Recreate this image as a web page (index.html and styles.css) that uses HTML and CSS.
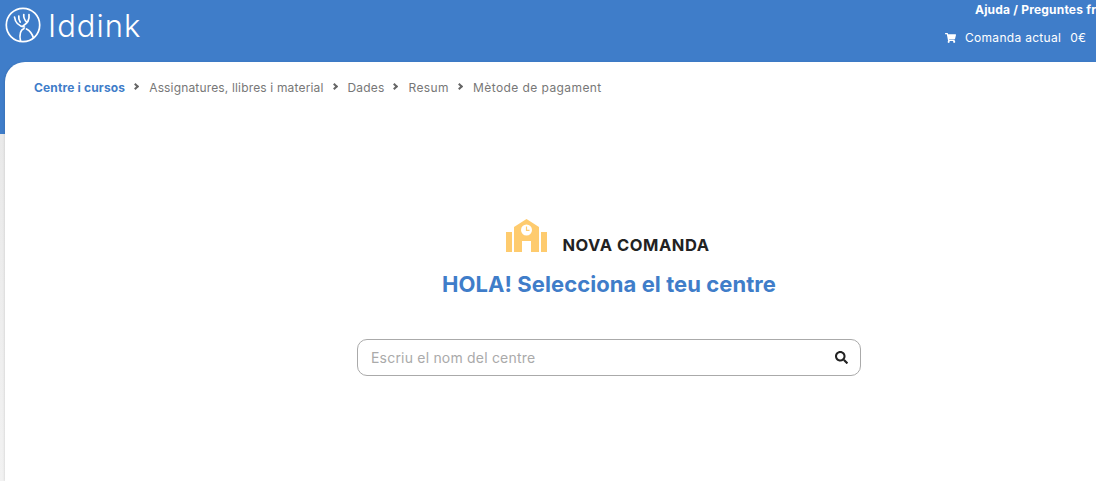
FILE: index.html
```html
<!DOCTYPE html>
<html lang="ca">
<head>
  <meta charset="UTF-8">
  <meta name="viewport" content="width=device-width, initial-scale=1" />
  <title>Iddink | Nova comanda</title>
  <link rel="stylesheet" href="styles.css">
</head>
<body>
  <header class="topbar">
    <a class="brand" href="#">
      <svg class="brand-logo" viewBox="0 0 36 36" fill="none" stroke="#fff" stroke-width="1.700" stroke-linecap="round" stroke-linejoin="round">
        <circle cx="18" cy="18" r="16.700" />
        <path d="M9.500 10c.6 4.500 3 9 10 10" />
        <path d="M13.800 9c-.3 2 0 4 1.400 6" />
        <path d="M24 7.500c.6 4.500-1 8.500-6 11.500" />
        <path d="M18.800 7.500c-.4 2.500.4 5 2.800 7.500" />
        <path d="M19 21.500c-3.500 1.500-5 5-3.500 12.500" />
        <path d="M21.500 22c3 1.500 5.500 4.500 7 9" />
      </svg>
      <span class="brand-name">Iddink</span>
    </a>
    <div class="topbar-links">
      <a class="help-link" href="#">Ajuda / Preguntes freqüents</a>
      <a class="cart-link" href="#">
        <svg class="cart-icon" viewBox="0 0 576 512" fill="#fff">
          <path d="M528 301.300l47.300-208C578.700 78.300 567.300 64 552 64H159.200l-9.200-44.800C147.800 8 137.900 0 126.500 0H24C10.700 0 0 10.700 0 24v16c0 13.300 10.700 24 24 24h69.900l70.200 343.400C147.300 417.100 136 435.200 136 456c0 30.900 25.100 56 56 56s56-25.100 56-56c0-15.700-6.400-29.800-16.800-40h209.600C430.400 426.200 424 440.300 424 456c0 30.900 25.100 56 56 56s56-25.100 56-56c0-22.200-12.900-41.300-31.600-50.400l5.500-24.300c3.400-15-8-29.300-23.400-29.300H218.100l-6.500-32h293c11.200 0 20.900-7.800 23.400-18.700z" />
        </svg>
        <span>Comanda actual</span>
        <span>0€</span>
      </a>
    </div>
  </header>

  <div class="page">
    <main class="card">
      <nav class="steps">
        <span class="step step-active">Centre i cursos</span>
        <span class="step-sep"></span>
        <span class="step">Assignatures, llibres i material</span>
        <span class="step-sep"></span>
        <span class="step">Dades</span>
        <span class="step-sep"></span>
        <span class="step step-wide">Resum</span>
        <span class="step-sep"></span>
        <span class="step step-wide">Mètode de pagament</span>
      </nav>

      <section class="school">
        <div class="school-title">
          <svg class="school-icon" viewBox="0 0 41 33" fill="#fecb6e">
            <rect x="0" y="13" width="6" height="20" />
            <rect x="35" y="13" width="6" height="20" />
            <path d="M20.500 0L33 8v25H8V8z" />
            <rect fill="#fff" x="16" y="22" width="9" height="11" />
            <circle fill="#fff" cx="20.500" cy="11" r="5.500" />
            <path fill="none" stroke="#fecb6e" stroke-width="1.200" d="M20.500 7.500v3.800h3" />
          </svg>
          <h2>NOVA COMANDA</h2>
        </div>
        <h1>HOLA! Selecciona el teu centre</h1>
        <form class="search">
          <input type="text" placeholder="Escriu el nom del centre" />
          <svg class="search-icon" viewBox="0 0 512 512" fill="#222">
            <path d="M505 442.700L405.300 343c-4.500-4.500-10.600-7-17-7H372c27.600-35.300 44-79.700 44-128C416 93.100 322.900 0 208 0S0 93.100 0 208s93.100 208 208 208c48.300 0 92.700-16.400 128-44v16.300c0 6.400 2.500 12.500 7 17l99.700 99.700c9.400 9.400 24.600 9.400 33.900 0l28.300-28.300c9.400-9.400 9.400-24.600.1-34zM208 336c-70.700 0-128-57.200-128-128 0-70.700 57.200-128 128-128 70.700 0 128 57.200 128 128 0 70.700-57.200 128-128 128z" />
          </svg>
        </form>
      </section>
    </main>
  </div>
</body>
</html>
```

FILE: styles.css
```css
* {
  box-sizing: border-box;
}

html,
body {
  height: 100%;
}

body {
  margin: 0;
  font-family: "Inter", "Open Sans", sans-serif;
  background-color: #f1f1f1;
  overflow: hidden;
  display: flex;
  flex-direction: column;
}

a {
  color: #fff;
  text-decoration: none;
}

.topbar {
  height: 62px;
  flex-shrink: 0;
  background-color: #3f7dc9;
  display: flex;
  justify-content: space-between;
}

.brand {
  display: flex;
  align-items: center;
  gap: 7px;
  padding: 0 0 12px 5px;
}

.brand-logo {
  width: 36px;
  height: 36px;
}

.brand-name {
  font-size: 31px;
  font-weight: 300;
  letter-spacing: 1px;
}

.topbar-links {
  width: 151px;
  flex-shrink: 0;
  display: flex;
  flex-direction: column;
}

.help-link {
  padding: 2px 0 0 30px;
  font-size: 12px;
  line-height: 15px;
  font-weight: 700;
  letter-spacing: 0.2px;
  white-space: nowrap;
}

.cart-link {
  margin-top: 13px;
  display: flex;
  align-items: center;
  gap: 9px;
  font-size: 12px;
  line-height: 15px;
  letter-spacing: 0.3px;
  white-space: nowrap;
}

.cart-icon {
  width: 11px;
  height: 10px;
}

.page {
  flex: 1;
  padding-left: 5px;
  background: linear-gradient(#3f7dc9 72px, #e9e9e9 72px, #f2f2f2 100%);
}

.card {
  height: 100%;
  background: #fff;
  border-top-left-radius: 20px;
  box-shadow: -1px 0 2px rgba(0, 0, 0, 0.08);
}

.steps {
  display: flex;
  align-items: center;
  padding: 18px 0 0 29px;
  font-size: 12px;
  line-height: 15px;
  letter-spacing: 0.16px;
  color: #777;
}

.step-active {
  color: #3f7dc9;
  font-weight: 700;
}

.step-wide {
  letter-spacing: 0.42px;
}

.step-sep {
  width: 5px;
  height: 5px;
  margin: 0 11px 0 8px;
  border-top: 2px solid #666;
  border-right: 2px solid #666;
  transform: rotate(45deg);
  position: relative;
  top: -1px;
}

.school {
  width: 504px;
  margin: 0 0 0 352px;
  padding-top: 124px;
  display: flex;
  flex-direction: column;
  align-items: center;
}

.school-title {
  display: flex;
  align-items: flex-end;
  gap: 15px;
  height: 33px;
  margin-right: 2px;
}

.school-icon {
  width: 41px;
  height: 33px;
}

.school-title h2 {
  margin: 0;
  font-size: 16.500px;
  line-height: 19px;
  font-weight: 700;
  letter-spacing: 0.55px;
  color: #222;
  position: relative;
  top: 3px;
}

.school h1 {
  margin: 19px 0 0;
  font-size: 22px;
  line-height: 26px;
  font-weight: 700;
  letter-spacing: 0.07px;
  color: #3f7dc9;
}

.search {
  width: 100%;
  height: 37px;
  margin-top: 42px;
  padding: 0 12px 0 13px;
  display: flex;
  align-items: center;
  border: 1px solid #aaa;
  border-radius: 10px;
}

.search input {
  flex: 1;
  padding: 0;
  border: none;
  outline: none;
  font-family: inherit;
  font-size: 14px;
  letter-spacing: 0.2px;
}

.search input::placeholder {
  color: #aaa;
}

.search-icon {
  width: 13px;
  height: 13px;
}
```
